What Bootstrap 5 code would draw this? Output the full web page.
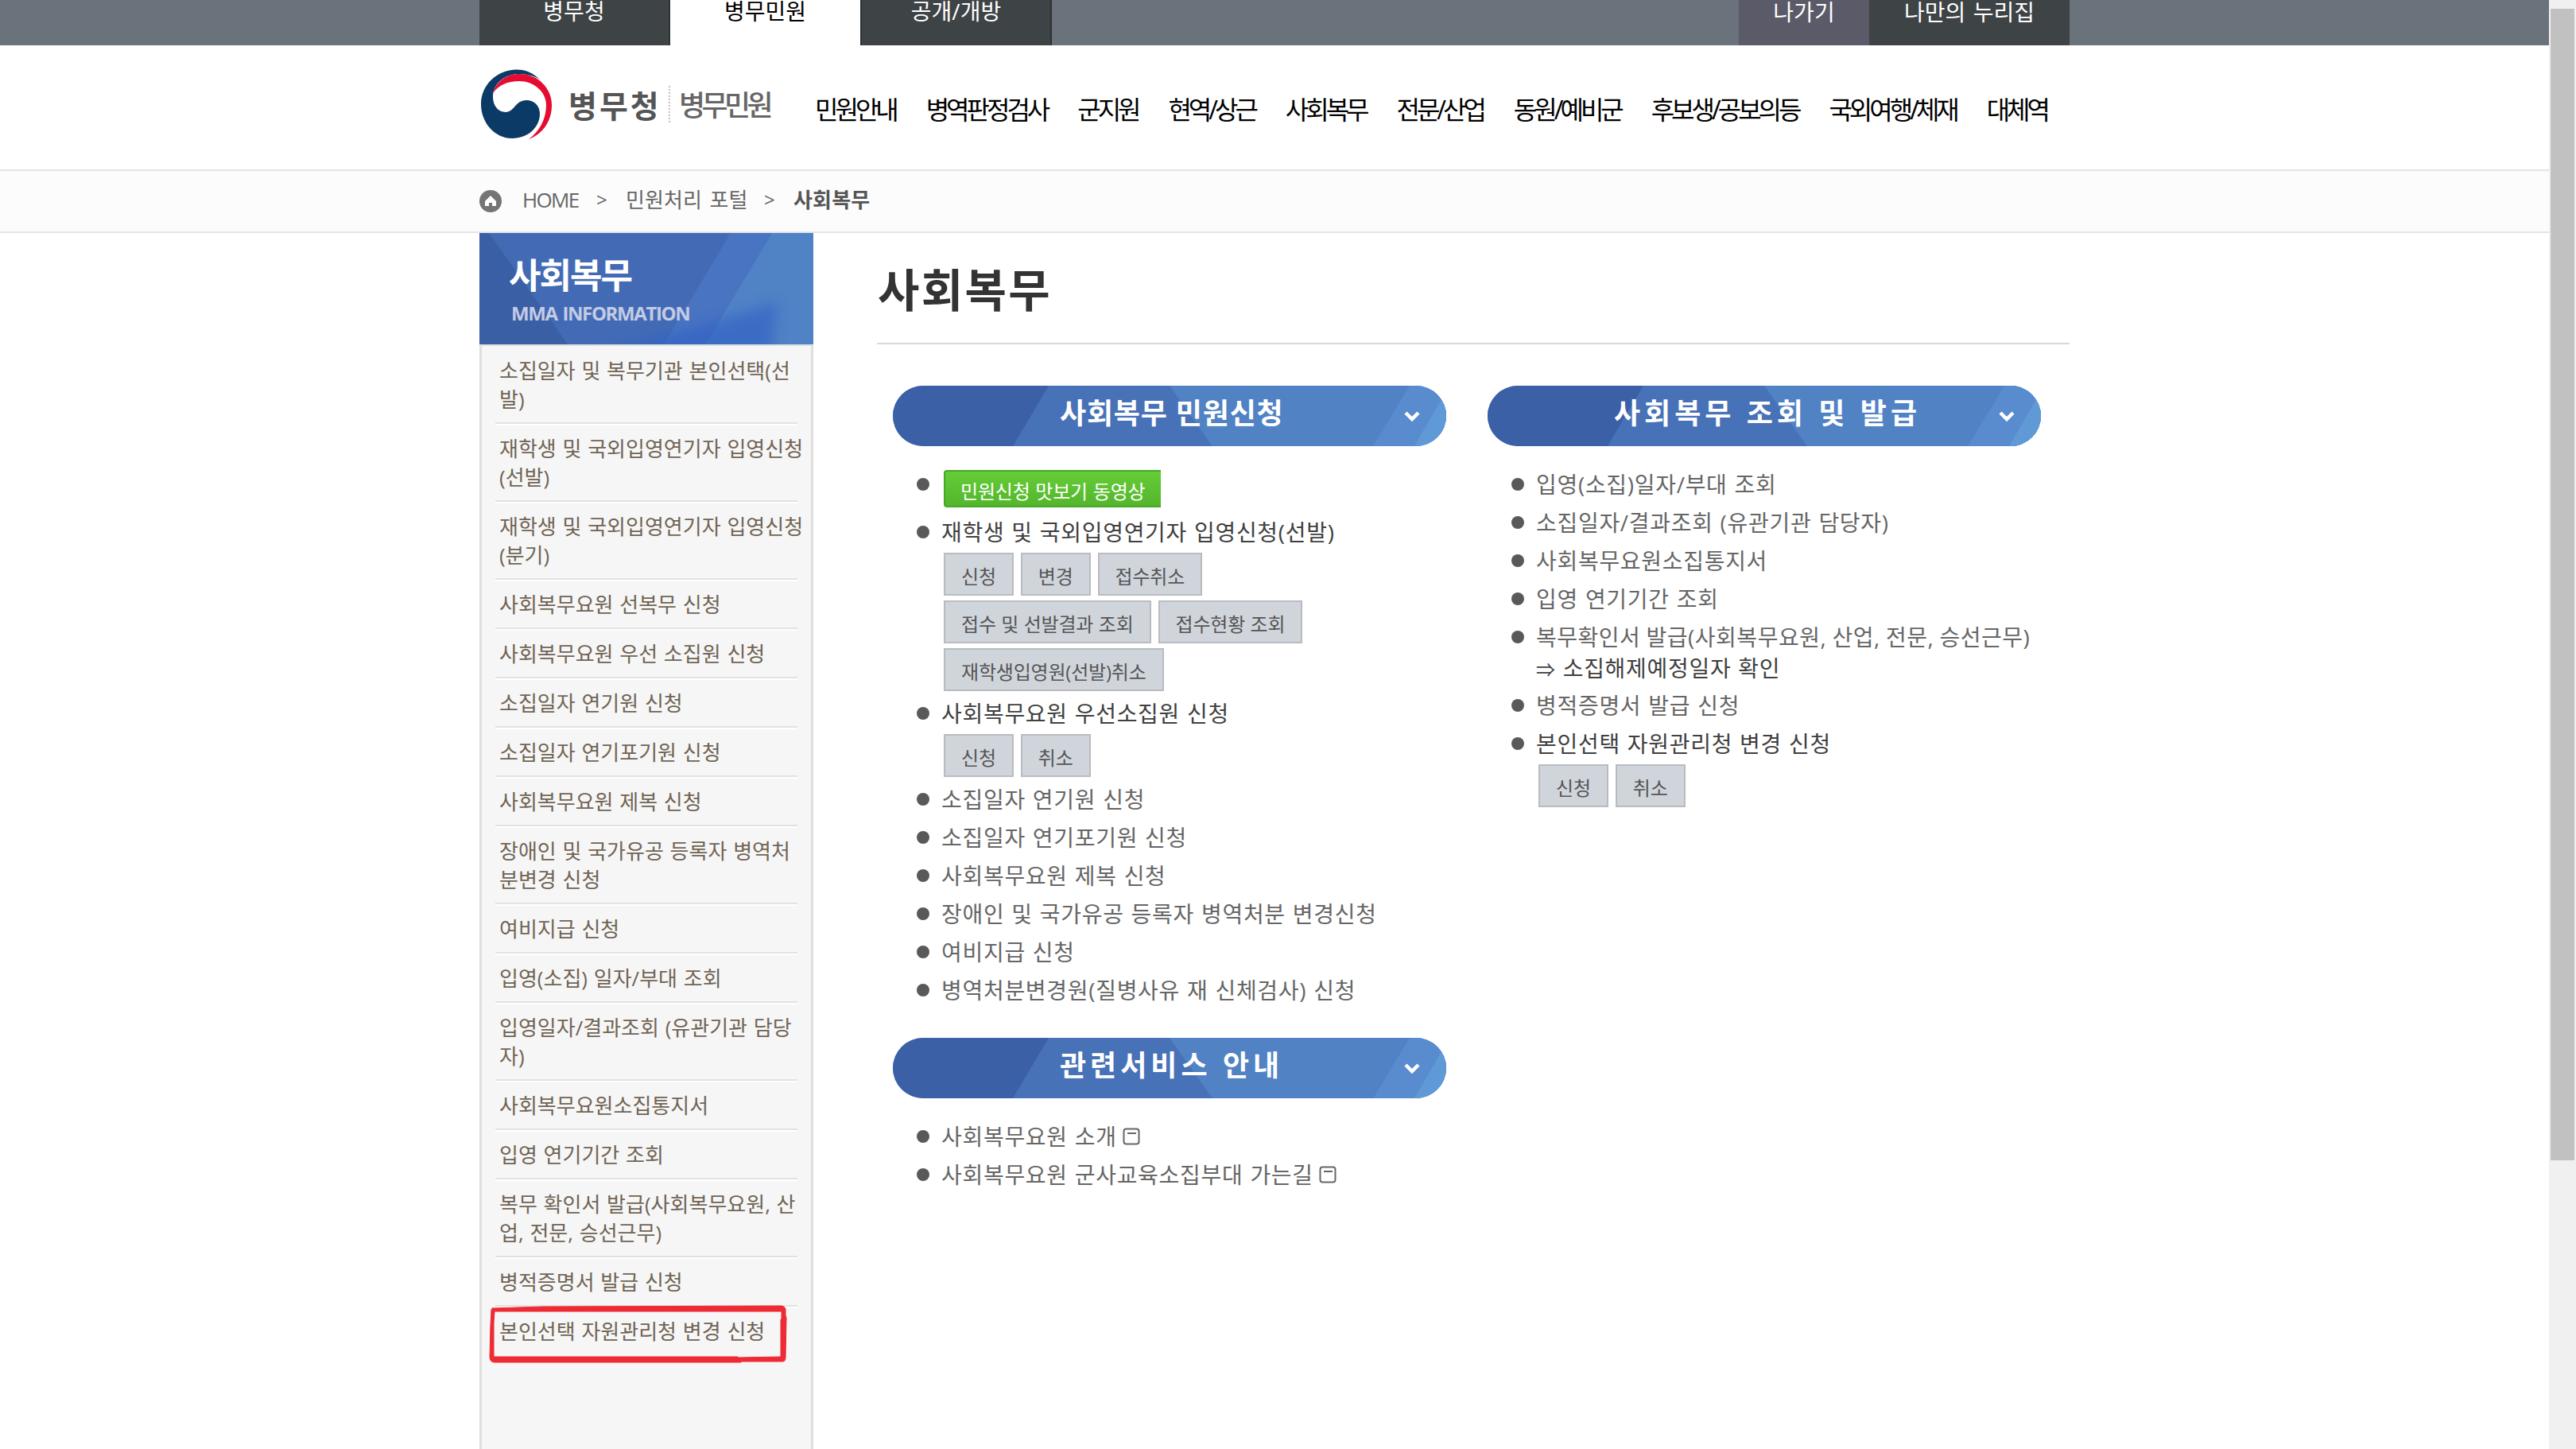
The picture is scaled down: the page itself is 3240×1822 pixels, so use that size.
<!DOCTYPE html>
<html lang="ko">
<head>
  <meta charset="UTF-8">
  <title>사회복무 - 병무민원</title>
  <link href="https://cdn.jsdelivr.net/npm/bootstrap@5.3.3/dist/css/bootstrap.min.css" rel="stylesheet">
  <style>
    body {
      height: 1822px;
      overflow: hidden;
      background: #fff;
      color: #666;
      font-family: "Open Sans", "Noto Sans CJK KR", sans-serif;
      font-size: 28px;
      white-space: nowrap;
    }
    a { color: inherit; text-decoration: none; }
    .page { width: 3206px; }
    .wrap { width: 2000px; margin-left: 603px; }

    /* top tabs */
    .top-bar { height: 57px; background: #6a737b; }
    .top-tab { height: 57px; line-height: 28px; text-align: center; color: #fff; background: #3e4346; }
    .tab-a { width: 240px; border-right: 2px solid #2f3337; }
    .tab-b { width: 239px; background: #fff; color: #000; }
    .tab-c { width: 241px; border-left: 2px solid #2f3337; border-right: 2px solid #2f3337; }
    .tab-out { width: 164px; background: #5a5a68; line-height: 30px; }
    .tab-my { width: 252px; line-height: 30px; word-spacing: 2px; }

    /* header */
    .site-head { height: 158px; border-bottom: 2px solid #e4e4e4; }
    .logo-name { margin-left: 20px; font-size: 39px; font-weight: 700; letter-spacing: 3px; color: #555; line-height: 54px; width: 126px; padding-top: 3px; }
    .logo-line { width: 2px; height: 46px; border-left: 2px dotted #c9bccb; }
    .logo-sub { margin-left: 11px; font-size: 36px; font-weight: 500; letter-spacing: -4.6px; color: #666; line-height: 56px; width: 171px; padding-top: 4px; }
    .main-nav { width: 1550px; padding-top: 18px; font-size: 32px; letter-spacing: -4px; color: #000; line-height: 50px; }

    .crumb-bar { height: 78px; padding-bottom: 1px; background: #fcfcfc; border-bottom: 2px solid #e4e4e4; font-size: 26px; line-height: 38px; }
    .crumb-bar span { margin-top: -3px; }
    .crumb-home { margin-left: 26px; width: 93px; letter-spacing: -1.7px; }
    .crumb-sep { width: 37px; font-size: 24px; }
    .crumb-mid { width: 174px; letter-spacing: .1px; word-spacing: 2.5px; }
    .crumb-now { font-weight: 700; letter-spacing: .2px; color: #555; }

    /* left menu */
    .side { width: 420px; height: 1529px; }
    .side-head { height: 140px; }
    .side-head svg { position: absolute; left: 0; top: 0; }
    .side-title { position: relative; padding: 25px 0 0 37px; font-size: 44px; font-weight: 700; letter-spacing: -2px; line-height: 56px; color: #fff; }
    .side-eng { position: relative; padding: 5px 0 0 40px; font-size: 24px; font-weight: 700; letter-spacing: -1.4px; word-spacing: 2px; line-height: 30px; color: #c3cbe5; }
    .side-menu { height: 1389px; background: #f6f6f6; border: 3px solid #dfdfdf; border-width: 2px 3px 0; padding: 0 17px; }
    .side-menu li { padding: 13px 0 11px 5px; border-bottom: 2px solid #e2e2e2; box-shadow: 0 2px 0 #fff; font-size: 26px; line-height: 36px; color: #706455; word-spacing: 1px; }
    .side-menu li:last-child { border: 0; box-shadow: none; }
    .pen-mark { position: absolute; left: 10px; top: 1347px; }

    /* content */
    .content { width: 1500px; }
    .page-title { height: 140px; margin: 0; padding: 31px 0 0 1px; border-bottom: 2px solid #d3d9de; font-size: 57px; font-weight: 700; letter-spacing: 2.300px; line-height: 80px; color: #333; }
    .cols { padding: 52px 0 0 20px; gap: 52px; }
    .svc { width: 696px; }
    .pill { height: 76px; }
    .pill svg { position: absolute; left: 0; top: 0; }
    .pill h2 { position: relative; margin: 0; padding-left: 210px; font-size: 36px; font-weight: 700; line-height: 69px; letter-spacing: .8px; color: #fff; }
    .pill h2.wide { letter-spacing: 5px; }
    .svc-list { margin: 24px 0 36px; padding-left: 30px; line-height: 48px; letter-spacing: .7px; word-spacing: 1px; }
    .svc-item { display: flex; }
    .svc-item::before { content: ""; flex: none; width: 16px; height: 16px; margin: 16px 15px 0 0; border-radius: 50%; background: #595959; }
    .svc-dark { color: #404040; }
    .svc-tight { letter-spacing: .5px; word-spacing: -.5px; }
    .svc-sub { height: 38px; line-height: 30px; }
    .svc-arrow { font-size: 24px; }
    .svc-btns { display: flex; flex-wrap: wrap; gap: 6px 9px; padding: 2px 0 4px 3px; }
    .svc-btns + .svc-btns { padding-top: 2px; }
    .svc-btn { height: 54px; padding: 2px 20px 0; border: 2px solid #b9bcbf; background: #d0d5dc; color: #555; font-size: 24px; line-height: 52px; letter-spacing: -.2px; word-spacing: .5px; }
    .video-btn { display: block; width: 273px; height: 47px; margin: 6px 0 7px 3px; padding-left: 19px; border: 2px solid #46a827; border-right: 0; border-radius: 4px 0 0 4px; background: linear-gradient(#66cc38, #53b62c); color: #fff; font-size: 24px; line-height: 50px; letter-spacing: -.2px; word-spacing: .8px; }
    .ext { margin-left: 7px; margin-top: -7px; }

    /* scrollbar */
    .sbar { position: absolute; right: 0; top: 0; width: 34px; height: 1822px; background: #f0f0f0; padding: 11px 2px 0; }
    .sbar-thumb { height: 1448px; background: #c1c1c1; }
  </style>
</head>
<body>

  <div class="page">
    <div class="top-bar">
      <div class="wrap d-flex">
        <a class="top-tab tab-a">병무청</a>
        <a class="top-tab tab-b">병무민원</a>
        <a class="top-tab tab-c">공개/개방</a>
        <a class="top-tab tab-out ms-auto">나가기</a>
        <a class="top-tab tab-my">나만의 누리집</a>
      </div>
    </div>

    <header class="site-head">
      <div class="wrap d-flex align-items-center pt-4">
        <a class="d-flex align-items-center pt-1">
          <svg width="92" height="92" viewBox="0 0 92 92">
            <path d="M47 2.500C22 2.500 2 22 2 46c0 24 18 43 39 43 20 0 35-14 35-31 0-10-7-17-17-17-14 0-15 15-26 15-10 0-16-9-16-19C17 20 32 8 50 8c10 0 20 3 26 7C68 7 58 2.500 47 2.500z" fill="#0b3a66"/>
            <path d="M17 32C22 16 36 8 50 8c24 0 41 18 41 39 0 21-12 37-29 43 14-10 22-26 22-43 0-17-16-30-34-30-14 0-26 5-33 15z" fill="#e60b31"/>
          </svg>
          <span class="logo-name">병무청</span>
          <span class="logo-line"></span>
          <span class="logo-sub">병무민원</span>
        </a>
        <nav class="main-nav d-flex justify-content-between">
          <a>민원안내</a>
          <a>병역판정검사</a>
          <a>군지원</a>
          <a>현역/상근</a>
          <a>사회복무</a>
          <a>전문/산업</a>
          <a>동원/예비군</a>
          <a>후보생/공보의등</a>
          <a>국외여행/체재</a>
          <a>대체역</a>
        </nav>
      </div>
    </header>

    <div class="crumb-bar">
      <div class="wrap h-100 d-flex align-items-center">
        <svg width="28" height="28" viewBox="0 0 28 28">
          <circle cx="14" cy="14" r="14" fill="#757575"/>
          <path d="M14 7l7 7v6h-5v-4h-4v4H7v-6z" fill="#fff"/>
        </svg>
        <span class="crumb-home">HOME</span>
        <span class="crumb-sep">&gt;</span>
        <span class="crumb-mid">민원처리 포털</span>
        <span class="crumb-sep">&gt;</span>
        <span class="crumb-now">사회복무</span>
      </div>
    </div>

    <div class="wrap d-flex justify-content-between">
      <aside class="side position-relative">
        <div class="side-head position-relative">
          <svg width="420" height="140" viewBox="0 0 420 140">
            <defs>
              <filter id="soft" x="-20%" y="-40%" width="140%" height="180%"><feGaussianBlur stdDeviation="8"/></filter>
            </defs>
            <path d="M0 0h420v140H0z" fill="#436bb5"/>
            <path d="M0 0h12l99 140H0z" fill="#3b5fa4"/>
            <path d="M316 0h52l-84 140h-52z" fill="#4874c2"/>
            <path d="M368 0h52v140H284z" fill="#5082c6"/>
            <path d="M140 150l110-25 125-38-8 63z" fill="#2f5fc4" opacity=".6" filter="url(#soft)"/>
          </svg>
          <div class="side-title">사회복무</div>
          <div class="side-eng">MMA INFORMATION</div>
        </div>
        <ul class="side-menu list-unstyled mb-0">
          <li>소집일자 및 복무기관 본인선택(선<br>발)</li>
          <li>재학생 및 국외입영연기자 입영신청<br>(선발)</li>
          <li>재학생 및 국외입영연기자 입영신청<br>(분기)</li>
          <li>사회복무요원 선복무 신청</li>
          <li>사회복무요원 우선 소집원 신청</li>
          <li>소집일자 연기원 신청</li>
          <li>소집일자 연기포기원 신청</li>
          <li>사회복무요원 제복 신청</li>
          <li>장애인 및 국가유공 등록자 병역처<br>분변경 신청</li>
          <li>여비지급 신청</li>
          <li>입영(소집) 일자/부대 조회</li>
          <li>입영일자/결과조회 (유관기관 담당<br>자)</li>
          <li>사회복무요원소집통지서</li>
          <li>입영 연기기간 조회</li>
          <li>복무 확인서 발급(사회복무요원, 산<br>업, 전문, 승선근무)</li>
          <li>병적증명서 발급 신청</li>
          <li>본인선택 자원관리청 변경 신청</li>
        </ul>
        <svg class="pen-mark" width="380" height="74" viewBox="0 0 380 74">
          <path d="M6 5L70 3l300-1q5 1 5 5v7l1 3-1 50q0 5-4 5h-52v1H9q-6 0-6-7l1-40 1-19zM9 9l-1 14v43h307l0 1 54-1V19l1 0V9H100z" fill="#ee2a34" stroke="#ee2a34" fill-rule="evenodd"/>
        </svg>
      </aside>

      <main class="content">
        <h1 class="page-title">사회복무</h1>
        <div class="cols d-flex">
          <div class="svc">
            <div class="pill position-relative">
              <svg width="696" height="76" viewBox="0 0 696 76">
                <defs>
                  <clipPath id="pillShape"><rect width="696" height="76" rx="38"/></clipPath>
                  <g id="pillArt" clip-path="url(#pillShape)">
                    <path d="M0 0h696v76H0z" fill="#4872b7"/>
                    <path d="M0 0h196l-45 76H0z" fill="#3c60a6"/>
                    <path d="M348 0h348v76H402z" fill="#5082c4"/>
                    <path d="M650 0h46v76h-92z" fill="#588ccf"/>
                    <path d="M700 0v76h-44z" fill="#5f9ad6"/>
                    <path d="M645 34l8 8 8-8" fill="none" stroke="#fff" stroke-width="4.500"/>
                  </g>
                </defs>
                <use href="#pillArt"/>
              </svg>
              <h2>사회복무 민원신청</h2>
            </div>
            <ul class="svc-list list-unstyled">
              <li class="svc-item"><a class="video-btn">민원신청 맛보기 동영상</a></li>
              <li class="svc-item svc-dark">
                <div>
                  재학생 및 국외입영연기자 입영신청(선발)
                  <div class="svc-btns"><a class="svc-btn">신청</a><a class="svc-btn">변경</a><a class="svc-btn">접수취소</a></div>
                  <div class="svc-btns"><a class="svc-btn">접수 및 선발결과 조회</a><a class="svc-btn">접수현황 조회</a></div>
                  <div class="svc-btns"><a class="svc-btn">재학생입영원(선발)취소</a></div>
                </div>
              </li>
              <li class="svc-item svc-dark">
                <div>
                  사회복무요원 우선소집원 신청
                  <div class="svc-btns"><a class="svc-btn">신청</a><a class="svc-btn">취소</a></div>
                </div>
              </li>
              <li class="svc-item">소집일자 연기원 신청</li>
              <li class="svc-item">소집일자 연기포기원 신청</li>
              <li class="svc-item">사회복무요원 제복 신청</li>
              <li class="svc-item">장애인 및 국가유공 등록자 병역처분 변경신청</li>
              <li class="svc-item">여비지급 신청</li>
              <li class="svc-item">병역처분변경원(질병사유 재 신체검사) 신청</li>
            </ul>

            <div class="pill position-relative">
              <svg width="696" height="76" viewBox="0 0 696 76"><use href="#pillArt"/></svg>
              <h2 class="wide">관련서비스 안내</h2>
            </div>
            <ul class="svc-list list-unstyled">
              <li class="svc-item">
                <div>사회복무요원 소개<svg class="ext" width="22" height="22" viewBox="0 0 22 22"><rect x="1.500" y="1.500" width="19" height="19" rx="3" fill="none" stroke="#666" stroke-width="2"/><path d="M6 7h11" stroke="#666" stroke-width="2"/></svg></div>
              </li>
              <li class="svc-item">
                <div>사회복무요원 군사교육소집부대 가는길<svg class="ext" width="22" height="22" viewBox="0 0 22 22"><rect x="1.500" y="1.500" width="19" height="19" rx="3" fill="none" stroke="#666" stroke-width="2"/><path d="M6 7h11" stroke="#666" stroke-width="2"/></svg></div>
              </li>
            </ul>
          </div>

          <div class="svc">
            <div class="pill position-relative">
              <svg width="696" height="76" viewBox="0 0 696 76"><use href="#pillArt"/></svg>
              <h2 class="wide ps-2 text-center">사회복무 조회 및 발급</h2>
            </div>
            <ul class="svc-list list-unstyled">
              <li class="svc-item">입영(소집)일자/부대 조회</li>
              <li class="svc-item">소집일자/결과조회 (유관기관 담당자)</li>
              <li class="svc-item">사회복무요원소집통지서</li>
              <li class="svc-item">입영 연기기간 조회</li>
              <li class="svc-item">
                <div>
                  <span class="svc-tight">복무확인서 발급(사회복무요원, 산업, 전문, 승선근무)</span>
                  <div class="svc-sub svc-dark"><span class="svc-arrow">⇒</span> 소집해제예정일자 확인</div>
                </div>
              </li>
              <li class="svc-item">병적증명서 발급 신청</li>
              <li class="svc-item svc-dark">
                <div>
                  본인선택 자원관리청 변경 신청
                  <div class="svc-btns"><a class="svc-btn">신청</a><a class="svc-btn">취소</a></div>
                </div>
              </li>
            </ul>
          </div>
        </div>
      </main>
    </div>
  </div>

  <div class="sbar"><div class="sbar-thumb"></div></div>

  <script src="https://cdn.jsdelivr.net/npm/bootstrap@5.3.3/dist/js/bootstrap.bundle.min.js"></script>
</body>
</html>
